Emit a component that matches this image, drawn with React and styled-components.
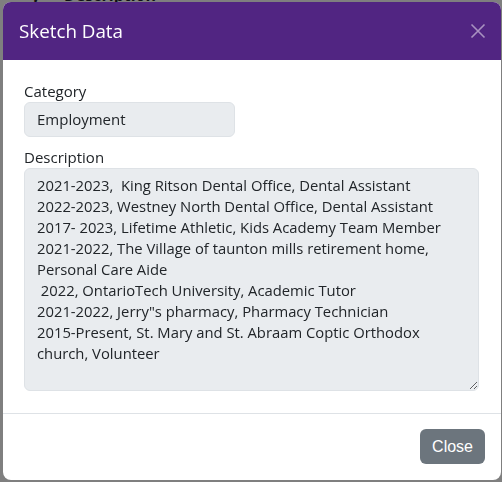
import React from "react";
import styled, { createGlobalStyle } from "styled-components";

const GlobalStyle = createGlobalStyle`
  * { box-sizing: border-box; }
  html, body { margin: 0; padding: 0; }
  body {
    background: #ffffff;
    font-family: "Open Sans", "Liberation Sans", sans-serif;
    color: #212529;
  }
`;

// 뒤에 깔린 페이지 (테이블 헤더 일부만 보임)
const Page = styled.div`
  width: 502px;
  height: 482px;
  overflow: hidden;
`;

const BehindRow = styled.div`
  display: flex;
  gap: 24px;
  margin-top: -13px;
  font-weight: 700;
  font-size: 16px;
  line-height: 16px;
  color: #212529;
`;

// 모달 배경
const Backdrop = styled.div`
  position: fixed;
  inset: 0;
  background: rgba(0, 0, 0, 0.5);
`;

const Modal = styled.div`
  position: fixed;
  top: 2px;
  left: 3px;
  width: 498px;
  height: 478px;
  display: flex;
  flex-direction: column;
  background: #ffffff;
  border-radius: 8px;
  overflow: hidden;
`;

const Header = styled.div`
  display: flex;
  align-items: center;
  justify-content: space-between;
  height: 58px;
  padding: 0 11px 0 16px;
  background: #512582;
`;

const Title = styled.h5`
  margin: 0;
  font-size: 18.8px;
  font-weight: 500;
  color: #ffffff;
`;

const CloseX = styled.button`
  display: flex;
  align-items: center;
  justify-content: center;
  width: 24px;
  height: 24px;
  padding: 0;
  border: none;
  background: transparent;
  opacity: 0.5;
  cursor: pointer;
`;

const Body = styled.div`
  flex: 1;
  display: flex;
  flex-direction: column;
  padding: 21px 22px 22px 21px;
  border-bottom: 1px solid #dee2e6;
`;

const Label = styled.label`
  display: block;
  font-size: 15px;
  line-height: 21px;
  margin-top: ${(p) => (p.$first ? "0" : "10px")};
`;

const Field = styled.input`
  width: 211px;
  height: 35px;
  padding: 6px 12px;
  font-family: inherit;
  font-size: 15px;
  color: #212529;
  background: #e9ecef;
  border: 1px solid #dee2e6;
  border-radius: 6px;
  outline: none;
`;

const Area = styled.textarea`
  width: 100%;
  height: 223px;
  padding: 6px 12px;
  font-family: inherit;
  font-size: 14.8px;
  line-height: 21px;
  color: #212529;
  background: #e9ecef;
  border: 1px solid #dee2e6;
  border-radius: 6px;
  outline: none;
  resize: vertical;
`;

const Footer = styled.div`
  display: flex;
  justify-content: flex-end;
  align-items: center;
  height: 67px;
  padding: 0 16px;
`;

const Button = styled.button`
  height: 35px;
  padding: 0 12px;
  font-family: "Liberation Sans", Arial, sans-serif;
  font-size: 16px;
  color: #ffffff;
  background: #6c757d;
  border: none;
  border-radius: 6px;
  cursor: pointer;
`;

const description = [
  "2021-2023,  King Ritson Dental Office, Dental Assistant",
  "2022-2023, Westney North Dental Office, Dental Assistant",
  "2017- 2023, Lifetime Athletic, Kids Academy Team Member",
  "2021-2022, The Village of taunton mills retirement home, Personal Care Aide",
  " 2022, OntarioTech University, Academic Tutor",
  '2021-2022, Jerry"s pharmacy, Pharmacy Technician',
  "2015-Present, St. Mary and St. Abraam Coptic Orthodox church, Volunteer",
].join("\n");

export default function App() {
  return (
    <>
      <GlobalStyle />
      <Page>
        <BehindRow>
          <span style={{ width: 40, textAlign: "right" }}>y</span>
          <span>Description</span>
        </BehindRow>
      </Page>
      <Backdrop />
      <Modal>
        <Header>
          <Title>Sketch Data</Title>
          <CloseX aria-label="Close">
            <svg width="16" height="16" viewBox="0 0 16 16">
              <path d="M1.5 1.5 L14.5 14.5 M14.5 1.5 L1.5 14.5" stroke="#ffffff" strokeWidth="1.6" />
            </svg>
          </CloseX>
        </Header>
        <Body>
          <Label $first>Category</Label>
          <Field readOnly value="Employment" />
          <Label>Description</Label>
          <Area readOnly value={description} />
        </Body>
        <Footer>
          <Button>Close</Button>
        </Footer>
      </Modal>
    </>
  );
}
